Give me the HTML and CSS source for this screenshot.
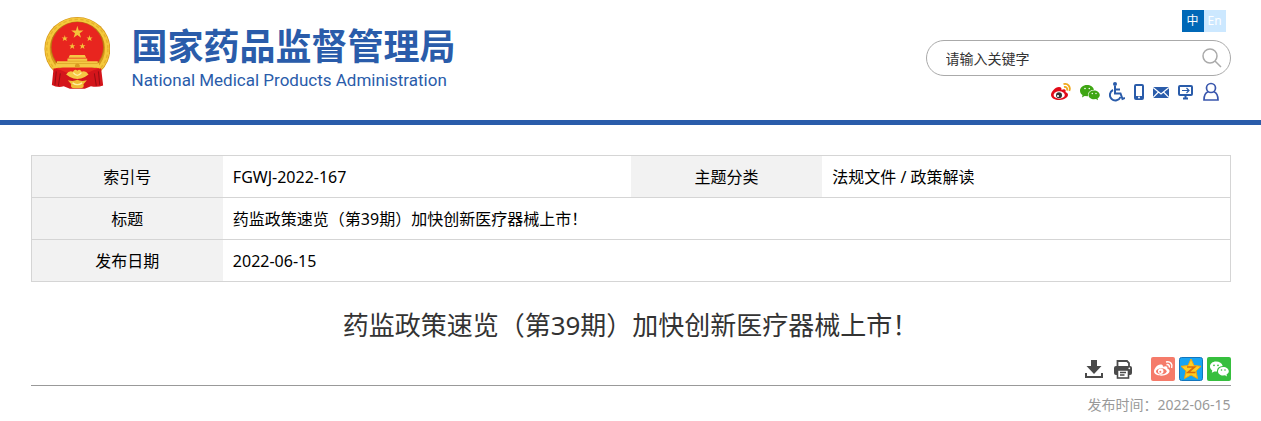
FILE: index.html
```html
<!DOCTYPE html>
<html lang="zh-CN">
<head>
    <meta charset="UTF-8">
    <meta name="viewport" content="width=device-width, initial-scale=1.0">
    <title>药监政策速览（第39期）加快创新医疗器械上市！</title>
    <link rel="stylesheet" href="styles.css">
</head>
<body>

    <!-- Header -->
    <header class="header">
        <div class="container header-inner">
            <a class="logo" href="#">
                <svg class="emblem" viewBox="44 38 194 212" aria-hidden="true">
                    <ellipse cx="142" cy="132" rx="97" ry="94" fill="#d89a1c"/>
                    <ellipse cx="142" cy="132" rx="88" ry="85" fill="none" stroke="#f5c93c" stroke-width="13"/>
                    <ellipse cx="142" cy="132" rx="90" ry="87" fill="none" stroke="#e6b22c" stroke-width="4" stroke-dasharray="10 7"/>
                    <ellipse cx="142" cy="127" rx="79" ry="76" fill="#b97a12"/>
                    <ellipse cx="142" cy="127" rx="76" ry="74" fill="#e8251f"/>
                    <g fill="#f4c33a">
                        <path d="M142 64 L146 78 L160 78 L149 86 L153 99 L142 91 L131 99 L135 86 L124 78 L138 78Z"/>
                        <path id="star" d="M105 91 L107 98 L114 98 L109 102 L111 109 L105 105 L99 109 L101 102 L96 98 L103 98Z"/>
                        <use href="#star" x="73"/>
                        <use href="#star" x="22" y="23"/>
                        <use href="#star" x="52" y="23"/>
                    </g>
                    <path d="M120 150 H164 L168 158 H116Z M113 160 H171 V168 H202 V174 H206 V187 H78 V174 H82 V168 H113Z" fill="#f5c944"/>
                    <path d="M113 168 H171 M82 175 H202" stroke="#d99b22" stroke-width="2"/>
                    <path d="M135 187 v-8 q7 -8 14 0 v8z" fill="#d99b22"/>
                    <path d="M76 188 H208 L192 204 H92Z" fill="#e8251f"/>
                    <path d="M72 189 Q92 192 116 204 H168 Q192 192 212 189 L218 240 Q202 246 182 242 L164 249 H120 L102 242 Q84 248 67 238Z" fill="#d4151b"/>
                    <path d="M80 198 L76 238 M92 204 L86 241 M204 198 L208 238 M192 204 L198 241" stroke="#980e14" stroke-width="3"/>
                    <path d="M109 207 Q118 194 129 199 Q135 190 142 196 Q149 190 155 199 Q166 194 175 207 L164 215 Q142 226 120 215Z" fill="#f5c944"/>
                    <path d="M130 202 Q142 218 154 202" fill="none" stroke="#fff0a0" stroke-width="4"/>
                    <path d="M114 224 Q130 229 142 223 Q154 229 170 224 L160 236 Q164 247 150 248 H134 Q120 247 124 236Z" fill="#f1bd35"/>
                    <path d="M128 232 Q142 242 156 232" fill="none" stroke="#fff0a0" stroke-width="4"/>
                </svg>
                <span class="logo-text">
                    <span class="logo-cn">国家药品监督管理局</span>
                    <span class="logo-en" lang="en">National Medical Products Administration</span>
                </span>
            </a>

            <div class="tools">
                <div class="lang">
                    <a class="lang-link active" href="#">中</a>
                    <a class="lang-link" href="#" lang="en">En</a>
                </div>
                <form class="search" action="#">
                    <input class="search-input" type="text" placeholder="请输入关键字" aria-label="请输入关键字">
                    <button class="search-button" type="submit" aria-label="搜索">
                        <svg width="20" height="20" viewBox="0 0 20 20" fill="none" stroke="#aaa" stroke-width="1.5"><circle cx="8" cy="8" r="7"/><path d="M13 13 L19 19"/></svg>
                    </button>
                </form>
                <nav class="quick-links">
                    <a href="#" aria-label="微博">
                        <svg width="20" height="20" viewBox="0 0 20 20">
                            <path d="M8 5C4 5 0 10 0 13C0 16 4 18 8.500 18C13 18 17 15.500 17 12.800C17 11 15.500 10.500 14.500 10C15.500 7 13 6.500 10.500 8C10.800 6 10 5 8 5Z" fill="#e20a17"/>
                            <ellipse cx="8.200" cy="13" rx="5.600" ry="3.700" fill="#fff"/>
                            <circle cx="8" cy="13.200" r="3" fill="#333"/>
                            <circle cx="7" cy="14" r="1.100" fill="#fff"/>
                            <path d="M12.500 2.200C17 1 20 5 18.300 9M13 5C15.500 4.500 16.700 6.500 16 8.500" fill="none" stroke="#f0a818" stroke-width="1.800"/>
                        </svg>
                    </a>
                    <a href="#" aria-label="微信">
                        <svg width="20" height="20" viewBox="0 0 20 20" fill="#3fa614">
                            <path d="M7 3C3 3 0 5.500 0 8.500C0 10.500 1 12 2.500 13L2 15.500L4.600 14L8 14.300C7.500 10.500 10 8 14 7.800C13.300 5 10.500 3 7 3Z"/>
                            <path d="M14 8.500C11 8.500 8.500 10.400 8.500 13C8.500 15.500 11 17.300 14 17.300L16 17L18 18.200L17.600 16.300C19 15.500 19.800 14.300 19.800 13C19.800 10.400 17 8.500 14 8.500Z"/>
                            <g fill="#fff"><circle cx="5" cy="6.500" r=".8"/><circle cx="9.300" cy="6.500" r=".8"/><circle cx="12.300" cy="11.500" r=".7"/><circle cx="16" cy="11.500" r=".7"/></g>
                        </svg>
                    </a>
                    <a href="#" aria-label="无障碍">
                        <svg width="16" height="20" viewBox="0 0 16 20" fill="none" stroke="#2a5caa" stroke-width="2">
                            <circle cx="6" cy="2" r="2" fill="#2a5caa" stroke="none"/>
                            <path d="M6 4V11.500H11.500L13.500 17L16 16M6 7.500H11"/>
                            <path d="M4 8A5.500 5.500 0 1 0 11.500 15"/>
                        </svg>
                    </a>
                    <a href="#" aria-label="手机版">
                        <svg width="10" height="20" viewBox="0 0 10 20"><rect x="1" y="3" width="8" height="14" rx="1" fill="none" stroke="#2a5caa" stroke-width="2"/><path d="M1 14H9V17H1Z" fill="#2a5caa"/><circle cx="5" cy="15.500" r="1" fill="#fff"/></svg>
                    </a>
                    <a href="#" aria-label="邮箱">
                        <svg width="16" height="20" viewBox="0 0 16 20"><path d="M0 5H16V16H0Z" fill="#2a5caa"/><path d="M0 5.500L8 12L16 5.500M0 15.500L5.500 10M16 15.500L10.500 10" fill="none" stroke="#fff" stroke-width="1.200"/></svg>
                    </a>
                    <a href="#" aria-label="客户端">
                        <svg width="16" height="20" viewBox="0 0 16 20" fill="none" stroke="#2a5caa"><rect x="1" y="4" width="13" height="9" rx="1" stroke-width="2"/><path d="M4 8.500H11M8.500 6L11 8.500L8.500 11" stroke-width="1.200"/><path d="M7.500 13V17M5 16.500H10" stroke-width="2"/></svg>
                    </a>
                    <a href="#" aria-label="登录">
                        <svg width="16" height="20" viewBox="0 0 16 20" fill="none" stroke="#3a57ad" stroke-width="1.700"><circle cx="8" cy="6" r="4.500"/><path d="M5 9.800C2 11 1 13.500 1 18H15C15 13.500 14 11 11 9.800"/></svg>
                    </a>
                </nav>
            </div>
        </div>
    </header>

    <main class="container">
        <!-- Document info -->
        <table class="info">
            <tr>
                <th scope="row">索引号</th>
                <td>FGWJ-2022-167</td>
                <th scope="row">主题分类</th>
                <td>法规文件 / 政策解读</td>
            </tr>
            <tr>
                <th scope="row">标题</th>
                <td colspan="3">药监政策速览（第39期）加快创新医疗器械上市！</td>
            </tr>
            <tr>
                <th scope="row">发布日期</th>
                <td colspan="3">2022-06-15</td>
            </tr>
        </table>

        <h1 class="title">药监政策速览（第39期）加快创新医疗器械上市！</h1>

        <!-- Download, print and share -->
        <div class="actions">
            <div class="page-actions">
                <button class="icon-button" type="button" aria-label="下载">
                    <svg width="20" height="20" viewBox="0 0 20 20" fill="#4a4a4a"><path d="M7 1H13V7H17.500L10 15L2.500 7H7Z"/><path d="M2 14V18H18V14" fill="none" stroke="#4a4a4a" stroke-width="2"/></svg>
                </button>
                <button class="icon-button" type="button" aria-label="打印">
                    <svg width="20" height="20" viewBox="0 0 20 20"><path d="M4.500 7V2H14L16 4V7" fill="none" stroke="#4a4a4a" stroke-width="1.800"/><rect x="1" y="7" width="18" height="9" rx="2" fill="#4a4a4a"/><rect x="4.500" y="11" width="11" height="8" fill="#fff" stroke="#4a4a4a" stroke-width="1.600"/><path d="M7 13.500H13M7 16H11.500" stroke="#4a4a4a" stroke-width="1.300"/><circle cx="16.300" cy="9.300" r=".9" fill="#fff"/></svg>
                </button>
            </div>
            <div class="share">
                <a href="#" aria-label="分享到微博">
                    <svg width="24" height="24" viewBox="0 0 24 24">
                        <rect width="24" height="24" rx="2" fill="#f57b6a"/>
                        <path d="M9.500 7.500C6 7.500 3 12 3 14.500C3 17 6.500 18.700 10.500 18.700C15 18.700 18.500 16.500 18.500 14C18.500 12.500 17.500 12 16.300 11.500C17 9 14.500 8.800 12 9.800C12.300 8 11 7.500 9.500 7.500Z" fill="#fff"/>
                        <ellipse cx="10.300" cy="14.300" rx="5.300" ry="3" fill="#f57b6a"/>
                        <circle cx="9.700" cy="14.300" r="2.700" fill="#fff"/><circle cx="9.300" cy="14.800" r="1" fill="#f57b6a"/>
                        <path d="M15 5C19.500 3.800 22 7.500 20.600 11M15.500 7.700C17.800 7.200 18.800 8.700 18.200 10.500" fill="none" stroke="#fff" stroke-width="1.500"/>
                    </svg>
                </a>
                <a href="#" aria-label="分享到QQ空间">
                    <svg width="24" height="24" viewBox="0 0 24 24">
                        <rect x=".5" y=".5" width="23" height="23" rx="2" fill="#18a4f2" stroke="#1276bd"/>
                        <path d="M12 2L15 8.500L22 9.300L17 14L18.500 21.500L12 18L5.500 21.500L7 14L2 9.300L9 8.500Z" fill="#ffce22" stroke="#f5a60d"/>
                        <path d="M8 10H15.500L9 15.500H16.500" fill="none" stroke="#d96d0b" stroke-width="1.700"/>
                    </svg>
                </a>
                <a href="#" aria-label="分享到微信">
                    <svg width="24" height="24" viewBox="0 0 24 24">
                        <rect width="24" height="24" rx="2" fill="#36bf3e"/>
                        <g fill="#fff">
                            <path d="M9 4.500C5.500 4.500 3 6.800 3 9.500C3 11.300 4 12.700 5.300 13.500L4.800 15.800L7.300 14.400L10 14.600C9.800 11 12.300 9 15.700 8.900C15 6.300 12.500 4.500 9 4.500Z"/>
                            <path d="M16 10C13 10 11 12 11 14.300C11 16.800 13.200 18.500 16 18.500L18 18.200L20 19.500L19.500 17.500C21 16.700 21.800 15.500 21.800 14.300C21.800 12 19.500 10 16 10Z"/>
                        </g>
                        <g fill="#36bf3e"><circle cx="7" cy="8.300" r=".9"/><circle cx="11" cy="8.300" r=".9"/><circle cx="14.500" cy="13" r=".8"/><circle cx="18" cy="13" r=".8"/></g>
                    </svg>
                </a>
            </div>
        </div>
        <p class="date">发布时间：2022-06-15</p>
    </main>

</body>
</html>
```

FILE: styles.css
```css
/* Reset and Global Styles */
* {
    margin: 0;
    padding: 0;
    box-sizing: border-box;
}

body {
    font-family: "Noto Sans", "Noto Sans CJK SC", sans-serif;
    font-size: 16px;
    color: #000;
    background-color: #fff;
}

a {
    color: inherit;
    text-decoration: none;
}

svg {
    display: block;
}

.container {
    width: 100%;
    max-width: 1200px;
    margin: 0 auto;
}

/* Header */
.header {
    border-bottom: 5px solid #2a5caa;
}

.header-inner {
    display: flex;
    justify-content: space-between;
    align-items: flex-start;
    min-height: 120px;
}

.logo {
    display: flex;
    gap: 22px;
    padding: 17px 0 0 13px;
    color: #2a5caa;
}

.emblem {
    width: 66px;
    height: 72px;
}

.logo-text {
    display: flex;
    flex-direction: column;
    padding-top: 4px;
}

.logo-cn {
    font-family: "Noto Sans CJK SC", sans-serif;
    font-size: 36px;
    font-weight: 700;
    line-height: 46px;
}

.logo-en {
    font-family: Roboto, sans-serif;
    font-size: 17px;
    line-height: 26px;
}

.tools {
    display: flex;
    flex-direction: column;
    align-items: flex-end;
    padding-top: 10px;
}

/* Language switch */
.lang {
    display: flex;
    margin-right: 5px;
}

.lang-link {
    width: 22px;
    height: 22px;
    font-size: 12px;
    line-height: 22px;
    text-align: center;
    color: #fff;
    background-color: #cce8ff;
}

.lang-link.active {
    background-color: #0068b7;
}

/* Search */
.search {
    display: flex;
    align-items: center;
    width: 305px;
    height: 36px;
    margin-top: 8px;
    padding: 0 8px 0 19px;
    border: 1px solid #aaa;
    border-radius: 18px;
}

.search-input {
    flex: 1;
    min-width: 0;
    border: none;
    outline: none;
    font-family: inherit;
    font-size: 14px;
    background: none;
}

.search-input::placeholder {
    color: #333;
    opacity: 1;
}

.search-button,
.icon-button {
    border: none;
    background: none;
    cursor: pointer;
}

.quick-links {
    display: flex;
    gap: 9px;
    margin: 6px 12px 0 0;
}

/* Document info */
.info {
    width: 100%;
    margin-top: 30px;
    border: 1px solid #d5d5d5;
    border-collapse: collapse;
    table-layout: fixed;
}

.info tr {
    border-bottom: 1px solid #d5d5d5;
}

.info th,
.info td {
    height: 42px;
    padding: 0 10px;
    line-height: 24px;
}

.info th {
    width: 16%;
    font-weight: 400;
    background-color: #f2f2f2;
}

.info td {
    text-align: left;
}

/* Title */
.title {
    margin-top: 24px;
    font-size: 26px;
    font-weight: 400;
    line-height: 38px;
    text-align: center;
    color: #333;
}

/* Download, print and share */
.actions {
    display: flex;
    justify-content: flex-end;
    align-items: center;
    gap: 18px;
    margin-top: 13px;
    padding-bottom: 4px;
    border-bottom: 1px solid #999;
}

.page-actions {
    display: flex;
    gap: 9px;
}

.share {
    display: flex;
    gap: 4px;
}

.date {
    margin-top: 8px;
    font-size: 14px;
    line-height: 22px;
    text-align: right;
    color: #999;
}
```
